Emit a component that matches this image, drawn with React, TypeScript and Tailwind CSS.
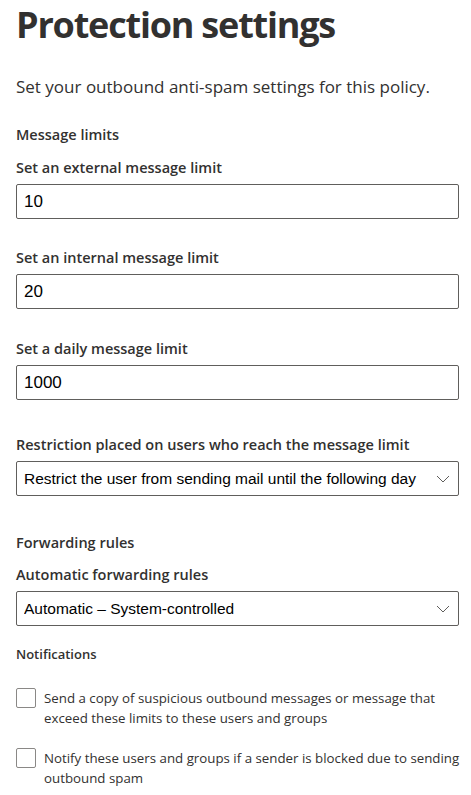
const ui = "font-['Open_Sans','Noto_Sans',sans-serif]";
const arial = "font-['Liberation_Sans',Arial,sans-serif]";

function Label({ text, className = "" }: { text: string; className?: string }) {
  return (
    <div className={`h-5 leading-5 text-[14.5px] font-semibold text-[#323130] ${className}`}>
      {text}
    </div>
  );
}

function TextBox({ value }: { value: string }) {
  return (
    <div
      className={`mt-[6px] h-[35px] flex items-center px-[7px] border border-[#605e5c] rounded-[2px] bg-white ${arial} text-[17px] text-black`}
    >
      {value}
    </div>
  );
}

function Dropdown({ value }: { value: string }) {
  return (
    <div
      className={`mt-[6px] h-[35px] flex items-center pl-[7px] pr-[8px] border border-[#605e5c] rounded-[2px] bg-white ${arial} text-[15.5px] text-black`}
    >
      <span className="flex-1 truncate">{value}</span>
      <svg width="14" height="8" viewBox="0 0 14 8" className="shrink-0">
        <polyline points="1,1 7,7 13,1" fill="none" stroke="#605e5c" strokeWidth="1" />
      </svg>
    </div>
  );
}

function Check({ text }: { text: string }) {
  return (
    <label className="flex items-start gap-[8px]">
      <span className="size-[20px] shrink-0 rounded-[2px] border border-[#8a8886] bg-white" />
      <span className="text-[13.3px] leading-5 text-[#323130]">{text}</span>
    </label>
  );
}

export default function App() {
  return (
    <div className={`min-h-screen bg-white pl-4 pr-3 ${ui} text-[#323130]`}>
      <h1 className="pt-[1px] text-[36px] leading-[48px] font-bold tracking-[-1.2px] text-[#323130]">
        Protection settings
      </h1>
      <p className="mt-[26px] text-[17px] leading-6">
        Set your outbound anti-spam settings for this policy.
      </p>

      <div className="mt-[26px] h-5 leading-5 text-[14.5px] font-semibold">Message limits</div>

      <Label text="Set an external message limit" className="mt-[13px]" />
      <TextBox value="10" />

      <Label text="Set an internal message limit" className="mt-[29px]" />
      <TextBox value="20" />

      <Label text="Set a daily message limit" className="mt-[30px]" />
      <TextBox value="1000" />

      <Label text="Restriction placed on users who reach the message limit" className="mt-[35px]" />
      <Dropdown value="Restrict the user from sending mail until the following day" />

      <div className="mt-[37px] h-5 leading-5 text-[14.5px] font-semibold">Forwarding rules</div>
      <Label text="Automatic forwarding rules" className="mt-[12px]" />
      <Dropdown value="Automatic – System-controlled" />

      <div className="mt-[19px] h-[18px] leading-[18px] text-[13px] font-semibold">Notifications</div>

      <div className="mt-[25px] -mr-3 flex flex-col gap-[20px] pb-4">
        <Check text="Send a copy of suspicious outbound messages or message that exceed these limits to these users and groups" />
        <Check text="Notify these users and groups if a sender is blocked due to sending outbound spam" />
      </div>
    </div>
  );
}
